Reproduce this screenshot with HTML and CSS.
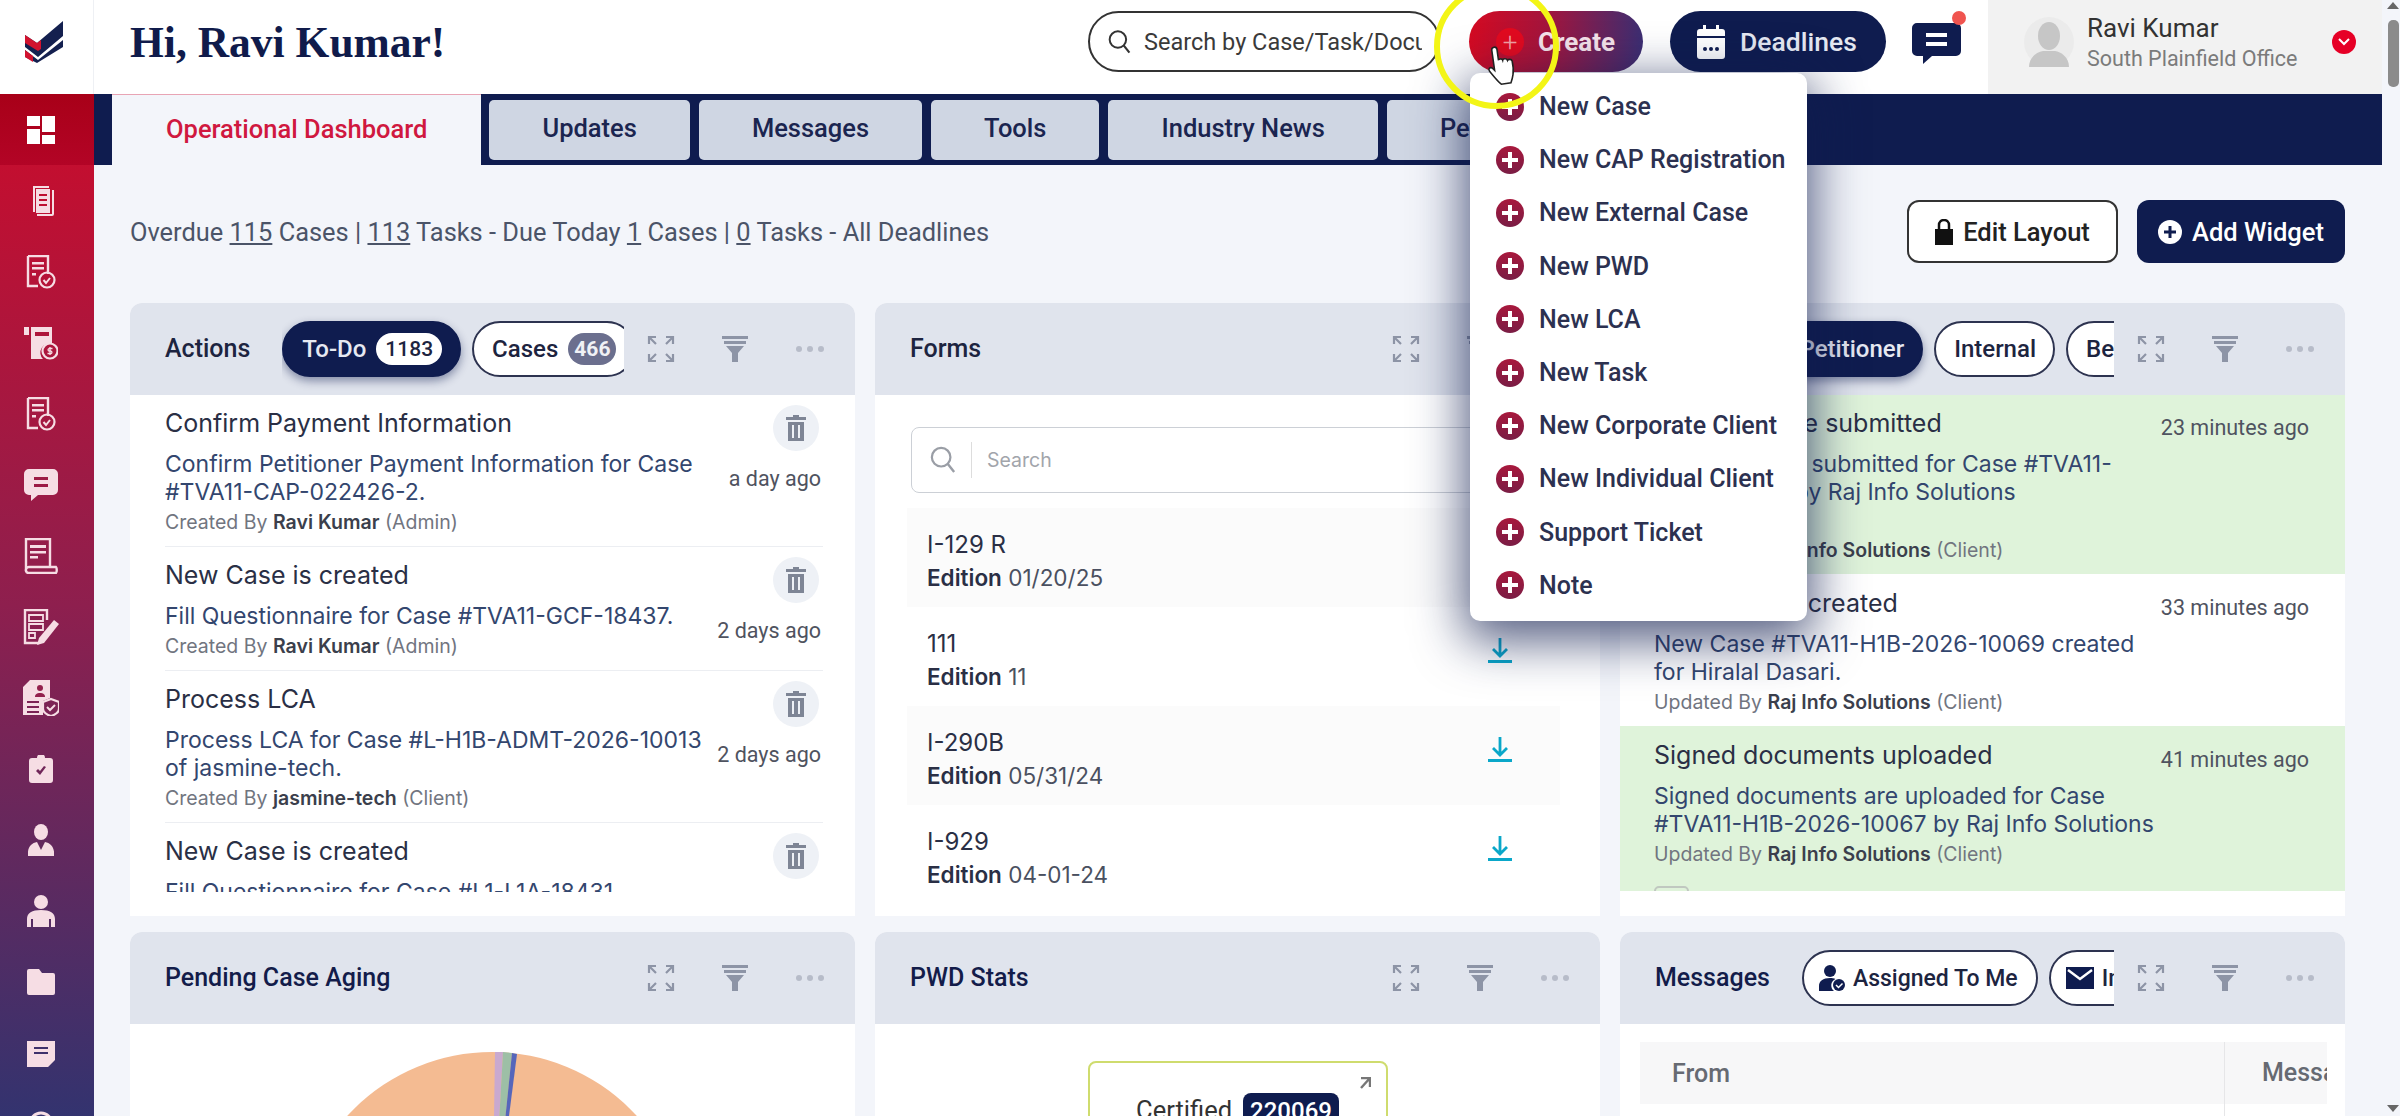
FILE: index.html
```html
<!DOCTYPE html>
<html lang="en">
<head>
  <meta charset="UTF-8">
  <title>Dashboard</title>
  <link rel="stylesheet" href="styles.css">
</head>
<body>

  <svg class="icon-defs" width="0" height="0">
    <defs>
      <symbol id="i-expand" viewBox="0 0 28 28">
        <path d="M2 9V2h7M2 2l7 7M19 2h7v7M26 2l-7 7M2 19v7h7M2 26l7-7M26 19v7h-7M26 26l-7-7" fill="none" stroke="currentColor" stroke-width="2.2"/>
      </symbol>
      <symbol id="i-filter" viewBox="0 0 26 26">
        <path d="M0 0h26v3H0zM2 5h22v3H2zM4 10h18l-6 7v9h-6v-9z" fill="currentColor"/>
      </symbol>
      <symbol id="i-dots" viewBox="0 0 30 6">
        <circle cx="4" cy="3" r="3" fill="currentColor"/><circle cx="15" cy="3" r="3" fill="currentColor"/><circle cx="26" cy="3" r="3" fill="currentColor"/>
      </symbol>
      <symbol id="i-trash" viewBox="0 0 20 26">
        <path d="M7 0h6v2h7v3H0V2h7zM2 7h16v19H2zM6 10v13h2V10zM12 10v13h2V10z" fill="currentColor" fill-rule="evenodd"/>
      </symbol>
      <symbol id="i-search" viewBox="0 0 28 30">
        <circle cx="12" cy="12" r="10" fill="none" stroke="currentColor" stroke-width="2.4"/>
        <path d="M19 19l7 9" stroke="currentColor" stroke-width="2.6" fill="none"/>
      </symbol>
      <symbol id="i-download" viewBox="0 0 24 26">
        <path d="M12 0v17M5 11l7 7 7-7" fill="none" stroke="currentColor" stroke-width="2.8"/>
        <path d="M0 22h24v3H0z" fill="currentColor"/>
      </symbol>
      <symbol id="i-plus" viewBox="0 0 28 28">
        <path d="M14 6v16M6 14h16" stroke="#fff" stroke-width="4"/>
      </symbol>
    </defs>
  </svg>

  <div class="page">
    <div class="app">
      <div class="brand">
        <svg width="38" height="42" viewBox="0 0 38 42">
          <path d="M0 14l12 8L38 0v15L13 36 0 26z" fill="#14204f"/>
          <path d="M0 14l12 8 4-3v9l-3 2L0 22z" fill="#d2122e"/>
          <path d="M0 29l13 10 25-20v7L12 42 0 36z" fill="#14204f"/>
          <path d="M0 29l8 6v6l-8-5z" fill="#d2122e"/>
        </svg>
      </div>

      <header class="topbar">
        <h1 class="greeting">Hi, Ravi Kumar!</h1>
        <div class="top-actions">
          <div class="global-search">
            <svg class="global-search-icon" width="28" height="30"><use href="#i-search"/></svg>
            <span class="global-search-text">Search by Case/Task/Document</span>
          </div>
          <div class="create-wrap">
            <button class="create-btn">
              <span class="create-plus">+</span>
              Create
            </button>
            <ul class="create-menu">
              <li><span class="plus-dot"><svg width="28" height="28"><use href="#i-plus"/></svg></span>New Case</li>
              <li><span class="plus-dot"><svg width="28" height="28"><use href="#i-plus"/></svg></span>New CAP Registration</li>
              <li><span class="plus-dot"><svg width="28" height="28"><use href="#i-plus"/></svg></span>New External Case</li>
              <li><span class="plus-dot"><svg width="28" height="28"><use href="#i-plus"/></svg></span>New PWD</li>
              <li><span class="plus-dot"><svg width="28" height="28"><use href="#i-plus"/></svg></span>New LCA</li>
              <li><span class="plus-dot"><svg width="28" height="28"><use href="#i-plus"/></svg></span>New Task</li>
              <li><span class="plus-dot"><svg width="28" height="28"><use href="#i-plus"/></svg></span>New Corporate Client</li>
              <li><span class="plus-dot"><svg width="28" height="28"><use href="#i-plus"/></svg></span>New Individual Client</li>
              <li><span class="plus-dot"><svg width="28" height="28"><use href="#i-plus"/></svg></span>Support Ticket</li>
              <li><span class="plus-dot"><svg width="28" height="28"><use href="#i-plus"/></svg></span>Note</li>
            </ul>
          </div>
          <button class="deadlines-btn">
            <svg width="28" height="34" viewBox="0 0 28 34">
              <path d="M6 0h3v4h10V0h3v4h3a3 3 0 0 1 3 3v4H0V7a3 3 0 0 1 3-3h3z" fill="#fff"/>
              <path d="M0 13h28v18a3 3 0 0 1-3 3H3a3 3 0 0 1-3-3z" fill="#fff"/>
              <circle cx="8" cy="24" r="2" fill="#0f1c4f"/><circle cx="14" cy="24" r="2" fill="#0f1c4f"/><circle cx="20" cy="24" r="2" fill="#0f1c4f"/>
            </svg>
            Deadlines
          </button>
          <div class="chat-btn">
            <svg width="49" height="42" viewBox="0 0 49 42">
              <path d="M5 1h39a5 5 0 0 1 5 5v23a5 5 0 0 1-5 5H20l-9 8v-8H5a5 5 0 0 1-5-5V6a5 5 0 0 1 5-5z" fill="#0f1c4f"/>
              <path d="M14 11h21v4H14zM14 20h21v4H14z" fill="#fff"/>
            </svg>
            <span class="chat-dot"></span>
          </div>
          <div class="user-box">
            <div class="avatar">
              <svg width="40" height="46" viewBox="0 0 40 46">
                <ellipse cx="20" cy="15" rx="11" ry="14" fill="#c6c6c6"/>
                <path d="M0 46c0-10 8-15 14-16h12c6 1 14 6 14 16z" fill="#c6c6c6"/>
              </svg>
            </div>
            <div class="user-text">
              <div class="user-name">Ravi Kumar</div>
              <div class="user-office">South Plainfield Office</div>
            </div>
            <span class="user-caret">
              <svg width="12" height="8" viewBox="0 0 12 8"><path d="M1 1l5 5 5-5" fill="none" stroke="#fff" stroke-width="2"/></svg>
            </span>
          </div>
        </div>
      </header>

      <nav class="sidebar">
        <a class="side-item active">
          <svg width="28" height="28" viewBox="0 0 28 28"><path d="M0 0h13v10H0zM0 13h13v15H0zM15 0h13v16H15zM15 19h13v9H15z" fill="currentColor"/></svg>
        </a>
        <a class="side-item">
          <svg width="26" height="30" viewBox="0 0 26 30"><path d="M5 0h16v2H7v24H5zM24 4h2v24a2 2 0 0 1-2 2H9v-2h15z" fill="currentColor"/><path fill-rule="evenodd" d="M8 3h14v24H8zM11 8v2h8V8zM11 13v2h8v-2zM11 18v2h8v-2z" fill="currentColor"/></svg>
        </a>
        <a class="side-item">
          <svg width="30" height="34" viewBox="0 0 30 34"><path d="M2 1h20v18M12 31H2V1" fill="none" stroke="currentColor" stroke-width="2.4"/><path d="M6 7h12v2.4H6zM6 12h12v2.4H6zM6 18h4v2.4H6z" fill="currentColor"/><circle cx="21" cy="25" r="7.5" fill="none" stroke="currentColor" stroke-width="2.2"/><path d="M17.5 25l2.5 3 4-5" fill="none" stroke="currentColor" stroke-width="2"/></svg>
        </a>
        <a class="side-item">
          <svg width="34" height="34" viewBox="0 0 34 34"><path d="M0 1h5v8H0z" fill="currentColor"/><path fill-rule="evenodd" d="M7 1h21v17a9 9 0 0 0-9 15H7zM11 6v4h14V6z" fill="currentColor"/><circle cx="26" cy="25" r="7.5" fill="none" stroke="currentColor" stroke-width="2.2"/><path d="M28.500 22.500h-3.500a1.300 1.300 0 0 0 0 2.500h2a1.300 1.300 0 0 1 0 2.500h-3.500M26 21v8" fill="none" stroke="currentColor" stroke-width="1.300"/></svg>
        </a>
        <a class="side-item">
          <svg width="30" height="34" viewBox="0 0 30 34"><path d="M2 1h20v18M12 31H2V1" fill="none" stroke="currentColor" stroke-width="2.4"/><path d="M6 7h12v2.4H6zM6 12h12v2.4H6zM6 18h4v2.4H6z" fill="currentColor"/><circle cx="21" cy="25" r="7.5" fill="none" stroke="currentColor" stroke-width="2.2"/><path d="M17.5 25l2.5 3 4-5" fill="none" stroke="currentColor" stroke-width="2"/></svg>
        </a>
        <a class="side-item">
          <svg width="34" height="32" viewBox="0 0 34 32"><path fill-rule="evenodd" d="M5 0h24a5 5 0 0 1 5 5v16a5 5 0 0 1-5 5H14l-7 6v-6H5a5 5 0 0 1-5-5V5a5 5 0 0 1 5-5zM10 8v3h14V8zM10 15v3h14v-3z" fill="currentColor"/></svg>
        </a>
        <a class="side-item">
          <svg width="34" height="36" viewBox="0 0 34 36"><path d="M2 33V1h24v27M2 33a3 3 0 0 1 3-4h27c1 1 1 5 0 6H5a3 3 0 0 1-3-2z" fill="none" stroke="currentColor" stroke-width="2.4"/><path d="M6 7h16v3H6zM6 13h16v2.400H6zM6 18h8v2.400H6z" fill="currentColor"/></svg>
        </a>
        <a class="side-item">
          <svg width="36" height="36" viewBox="0 0 36 36"><path d="M24 11V1H2v33h14" fill="none" stroke="currentColor" stroke-width="2.4"/><path d="M6 6h14v6H6zM6 15h14v6H6zM6 24h6v5H6z" fill="none" stroke="currentColor" stroke-width="1.800"/><path d="M31 11l5 4-15 19-7 2 2-7z" fill="currentColor"/></svg>
        </a>
        <a class="side-item">
          <svg width="36" height="36" viewBox="0 0 36 36"><path fill-rule="evenodd" d="M7 0h20v18l-7 3v14H0V7zM4 21v2h12v-2zM4 26v2h12v-2zM4 31v2h12v-2z" fill="currentColor"/><circle cx="17" cy="8" r="3" fill="#93204d"/><path d="M12 17c0-3 2-4 5-4s5 1 5 4z" fill="#93204d"/><path d="M28 19l8 3v7c0 3-4 6-8 7-4-1-8-4-8-7v-7z" fill="none" stroke="currentColor" stroke-width="2.200"/><path d="M24 27l3 3 5-5" fill="none" stroke="currentColor" stroke-width="2"/></svg>
        </a>
        <a class="side-item">
          <svg width="24" height="28" viewBox="0 0 24 28"><path fill-rule="evenodd" d="M8 3a4 4 0 0 1 8 0h5a3 3 0 0 1 3 3v19a3 3 0 0 1-3 3H3a3 3 0 0 1-3-3V6a3 3 0 0 1 3-3zM7 16l4 4 6-8-2-1-4 5-2-2z" fill="currentColor"/></svg>
        </a>
        <a class="side-item">
          <svg width="26" height="32" viewBox="0 0 26 32"><ellipse cx="13" cy="8" rx="7" ry="8" fill="currentColor"/><path d="M0 32c-1-8 3-13 9-14l4 8 4-8c6 1 10 6 9 14z" fill="currentColor"/></svg>
        </a>
        <a class="side-item">
          <svg width="28" height="32" viewBox="0 0 28 32"><circle cx="14" cy="7" r="7" fill="currentColor"/><path d="M0 32V24c0-6 5-9 14-9s14 3 14 9v8h-4v-8h-2v8H6v-8H4v8z" fill="currentColor"/></svg>
        </a>
        <a class="side-item">
          <svg width="28" height="26" viewBox="0 0 28 26"><path d="M2 0h10l3 4h11a2 2 0 0 1 2 2v18a2 2 0 0 1-2 2H2a2 2 0 0 1-2-2V2a2 2 0 0 1 2-2z" fill="currentColor"/></svg>
        </a>
        <a class="side-item">
          <svg width="28" height="28" viewBox="0 0 28 28"><path fill-rule="evenodd" d="M0 2h28v19l-7 7H0zM7 8v2h14V8zM7 13v2h14v-2z" fill="currentColor"/></svg>
        </a>
        <a class="side-item">
          <svg width="28" height="28" viewBox="0 0 28 28"><circle cx="14" cy="14" r="11" fill="none" stroke="currentColor" stroke-width="3"/></svg>
        </a>
      </nav>

      <main class="main">
        <div class="tabbar">
          <a class="tab active">Operational Dashboard</a>
          <a class="tab">Updates</a>
          <a class="tab">Messages</a>
          <a class="tab">Tools</a>
          <a class="tab">Industry News</a>
          <a class="tab">Petitions</a>
        </div>

        <section class="content">
          <div class="summary-row">
            <p class="summary">Overdue <u>115</u> Cases | <u>113</u> Tasks - Due Today <u>1</u> Cases | <u>0</u> Tasks - All Deadlines</p>
            <div class="summary-btns">
              <button class="btn-outline">
                <svg width="18" height="26" viewBox="0 0 18 26"><path d="M4 10V6a5 5 0 0 1 10 0v4" fill="none" stroke="#111" stroke-width="2.500"/><path d="M0 10h18v16H0z" fill="#111"/></svg>
                Edit Layout
              </button>
              <button class="btn-solid">
                <svg width="24" height="24" viewBox="0 0 24 24"><circle cx="12" cy="12" r="12" fill="#fff"/><path d="M12 6v12M6 12h12" stroke="#0f1c4f" stroke-width="3"/></svg>
                Add Widget
              </button>
            </div>
          </div>

          <div class="widgets">

            <article class="card">
              <div class="card-head">
                <h3 class="card-title">Actions</h3>
                <div class="pills">
                  <span class="pill on">To-Do <b class="count">1183</b></span>
                  <span class="pill">Cases <b class="count grey">466</b></span>
                </div>
                <div class="tools">
                  <svg class="tool" width="28" height="28"><use href="#i-expand"/></svg>
                  <svg class="tool" width="26" height="26"><use href="#i-filter"/></svg>
                  <svg class="tool faint" width="30" height="6"><use href="#i-dots"/></svg>
                </div>
              </div>
              <div class="card-body">
                <div class="feed">
                  <div class="feed-item">
                    <div class="feed-text">
                      <div class="feed-title">Confirm Payment Information</div>
                      <div class="feed-desc">Confirm Petitioner Payment Information for Case #TVA11-CAP-022426-2.</div>
                      <div class="feed-meta">Created By <b>Ravi Kumar</b> (Admin)</div>
                    </div>
                    <div class="feed-side">
                      <span class="trash"><svg width="20" height="26"><use href="#i-trash"/></svg></span>
                      <span class="when">a day ago</span>
                    </div>
                  </div>
                  <div class="feed-item">
                    <div class="feed-text">
                      <div class="feed-title">New Case is created</div>
                      <div class="feed-desc">Fill Questionnaire for Case #TVA11-GCF-18437.</div>
                      <div class="feed-meta">Created By <b>Ravi Kumar</b> (Admin)</div>
                    </div>
                    <div class="feed-side">
                      <span class="trash"><svg width="20" height="26"><use href="#i-trash"/></svg></span>
                      <span class="when">2 days ago</span>
                    </div>
                  </div>
                  <div class="feed-item">
                    <div class="feed-text">
                      <div class="feed-title">Process LCA</div>
                      <div class="feed-desc">Process LCA for Case #L-H1B-ADMT-2026-10013<br>of jasmine-tech.</div>
                      <div class="feed-meta">Created By <b>jasmine-tech</b> (Client)</div>
                    </div>
                    <div class="feed-side">
                      <span class="trash"><svg width="20" height="26"><use href="#i-trash"/></svg></span>
                      <span class="when">2 days ago</span>
                    </div>
                  </div>
                  <div class="feed-item">
                    <div class="feed-text">
                      <div class="feed-title">New Case is created</div>
                      <div class="feed-desc">Fill Questionnaire for Case #L1-L1A-18431.</div>
                      <div class="feed-meta">Created By <b>Ravi Kumar</b> (Admin)</div>
                    </div>
                    <div class="feed-side">
                      <span class="trash"><svg width="20" height="26"><use href="#i-trash"/></svg></span>
                      <span class="when">2 days ago</span>
                    </div>
                  </div>
                </div>
              </div>
            </article>

            <article class="card">
              <div class="card-head">
                <h3 class="card-title">Forms</h3>
                <div class="pills"></div>
                <div class="tools">
                  <svg class="tool" width="28" height="28"><use href="#i-expand"/></svg>
                  <svg class="tool" width="26" height="26"><use href="#i-filter"/></svg>
                  <svg class="tool faint" width="30" height="6"><use href="#i-dots"/></svg>
                </div>
              </div>
              <div class="card-body forms-body">
                <div class="form-search">
                  <svg width="26" height="28"><use href="#i-search"/></svg>
                  <span class="form-search-text">Search</span>
                </div>
                <div class="form-row">
                  <div><div class="form-name">I-129 R</div><div class="form-ed"><b>Edition</b> 01/20/25</div></div>
                  <svg class="dl" width="24" height="26"><use href="#i-download"/></svg>
                </div>
                <div class="form-row">
                  <div><div class="form-name">111</div><div class="form-ed"><b>Edition</b> 11</div></div>
                  <svg class="dl" width="24" height="26"><use href="#i-download"/></svg>
                </div>
                <div class="form-row">
                  <div><div class="form-name">I-290B</div><div class="form-ed"><b>Edition</b> 05/31/24</div></div>
                  <svg class="dl" width="24" height="26"><use href="#i-download"/></svg>
                </div>
                <div class="form-row">
                  <div><div class="form-name">I-929</div><div class="form-ed"><b>Edition</b> 04-01-24</div></div>
                  <svg class="dl" width="24" height="26"><use href="#i-download"/></svg>
                </div>
              </div>
            </article>

            <article class="card">
              <div class="card-head">
                <h3 class="card-title">Updates</h3>
                <div class="pills">
                  <span class="pill on">Petitioner</span>
                  <span class="pill">Internal</span>
                  <span class="pill">Beneficiary</span>
                </div>
                <div class="tools">
                  <svg class="tool" width="28" height="28"><use href="#i-expand"/></svg>
                  <svg class="tool" width="26" height="26"><use href="#i-filter"/></svg>
                  <svg class="tool faint" width="30" height="6"><use href="#i-dots"/></svg>
                </div>
              </div>
              <div class="card-body">
                <div class="updates">
                  <div class="update green">
                    <div class="feed-text">
                      <div class="feed-title">Questionnaire submitted</div>
                      <div class="feed-desc">Questionnaire submitted for Case #TVA11-<br>2026-10069 by Raj Info Solutions<br>&nbsp;</div>
                      <div class="feed-meta">Updated By <b>Raj Info Solutions</b> (Client)</div>
                    </div>
                    <span class="when">23 minutes ago</span>
                  </div>
                  <div class="update">
                    <div class="feed-text">
                      <div class="feed-title">New Case is created</div>
                      <div class="feed-desc">New Case #TVA11-H1B-2026-10069 created<br>for Hiralal Dasari.</div>
                      <div class="feed-meta">Updated By <b>Raj Info Solutions</b> (Client)</div>
                    </div>
                    <span class="when">33 minutes ago</span>
                  </div>
                  <div class="update green">
                    <div class="feed-text">
                      <div class="feed-title">Signed documents uploaded</div>
                      <div class="feed-desc">Signed documents are uploaded for Case<br>#TVA11-H1B-2026-10067 by Raj Info Solutions</div>
                      <div class="feed-meta">Updated By <b>Raj Info Solutions</b> (Client)</div>
                      <div class="update-box"></div>
                    </div>
                    <span class="when">41 minutes ago</span>
                  </div>
                </div>
              </div>
            </article>

            <article class="card">
              <div class="card-head">
                <h3 class="card-title strong">Pending Case Aging</h3>
                <div class="pills"></div>
                <div class="tools">
                  <svg class="tool" width="28" height="28"><use href="#i-expand"/></svg>
                  <svg class="tool" width="26" height="26"><use href="#i-filter"/></svg>
                  <svg class="tool faint" width="30" height="6"><use href="#i-dots"/></svg>
                </div>
              </div>
              <div class="card-body">
                <svg class="pie" width="725" height="92" viewBox="0 0 725 92">
                  <circle cx="362" cy="224" r="196" fill="#f4bb92"/>
                  <path d="M362 224L365 28L373 28z" fill="#c9a9cf"/>
                  <path d="M362 224L373 28L382 29z" fill="#9dbfa6"/>
                  <path d="M362 224L382 29L387 30z" fill="#5566bb"/>
                </svg>
              </div>
            </article>

            <article class="card">
              <div class="card-head">
                <h3 class="card-title strong">PWD Stats</h3>
                <div class="pills"></div>
                <div class="tools">
                  <svg class="tool" width="28" height="28"><use href="#i-expand"/></svg>
                  <svg class="tool" width="26" height="26"><use href="#i-filter"/></svg>
                  <svg class="tool faint" width="30" height="6"><use href="#i-dots"/></svg>
                </div>
              </div>
              <div class="card-body">
                <div class="stat-box">
                  <svg class="stat-arrow" width="12" height="12" viewBox="0 0 12 12"><path d="M2 1h9v9M11 1L2 11" fill="none" stroke="#777" stroke-width="2.400"/></svg>
                  <span class="stat-label">Certified</span>
                  <span class="stat-num">220069</span>
                </div>
              </div>
            </article>

            <article class="card">
              <div class="card-head">
                <h3 class="card-title strong">Messages</h3>
                <div class="pills">
                  <span class="pill with-icon">
                    <svg width="26" height="26" viewBox="0 0 26 26"><circle cx="11" cy="6" r="6" fill="#0f1c4f"/><path d="M0 26v-5c0-5 4-8 11-8 2 0 4 .3 5.500 1a7 7 0 0 0-1.500 12z" fill="#0f1c4f"/><circle cx="20" cy="20" r="6" fill="#0f1c4f"/><path d="M17 20l2.500 2.500 4-4" fill="none" stroke="#fff" stroke-width="1.500"/></svg>
                    Assigned To Me
                  </span>
                  <span class="pill with-icon">
                    <svg width="28" height="22" viewBox="0 0 28 22"><path d="M0 0h28v22H0z" fill="#0f1c4f"/><path d="M2 3l12 9 12-9" fill="none" stroke="#fff" stroke-width="2.400"/></svg>
                    Inbox
                  </span>
                </div>
                <div class="tools">
                  <svg class="tool" width="28" height="28"><use href="#i-expand"/></svg>
                  <svg class="tool" width="26" height="26"><use href="#i-filter"/></svg>
                  <svg class="tool faint" width="30" height="6"><use href="#i-dots"/></svg>
                </div>
              </div>
              <div class="card-body">
                <div class="msg-table">
                  <div class="msg-head">
                    <span class="msg-from">From</span>
                    <span class="msg-text">Message</span>
                  </div>
                  <div class="msg-line"></div>
                </div>
              </div>
            </article>

          </div>
        </section>
      </main>
    </div>

    <div class="scrollbar">
      <span class="scroll-up"></span>
      <span class="scroll-thumb"></span>
      <span class="scroll-down"></span>
    </div>

    <!-- recording overlay: click highlight and pointer -->
    <div class="click-ring"></div>
    <svg class="hand" width="32" height="44" viewBox="0 0 30 42">
      <path d="M9 2c1.500 0 2.500 1 2.500 2.500V15c0-1 3.500-2 4 .5.500-1.500 4-1.500 4.500.8.800-1.200 4-1 4.300 1.200.3 4 .2 9-1 13-1 3.500-2 5.500-3 7.500H11C8 35 4 28 1.500 24c-1-2 1-4 3-2.500l2 2.500V4.500C6.500 3 7.500 2 9 2z" fill="#fff" stroke="#222" stroke-width="1.500"/>
    </svg>
  </div>

</body>
</html>
```

FILE: styles.css
```css
* {
  box-sizing: border-box;
}

html, body {
  margin: 0;
  height: 1116px;
  overflow: hidden;
}

body {
  font-family: Roboto, sans-serif;
  background: #f3f5fa;
  color: #2a2f45;
}

.icon-defs {
  position: absolute;
}

.page {
  position: relative;
  display: flex;
  height: 1116px;
  overflow: hidden;
}

.app {
  display: grid;
  grid-template-columns: 94px 2288px;
  grid-template-rows: 94px 1022px;
  width: 2382px;
}

/* top row */
.brand {
  display: flex;
  align-items: center;
  justify-content: center;
  padding: 0 6px 10px 0;
  background: #fff;
  border-right: 1px solid #eef0f4;
}

.topbar {
  position: relative;
  z-index: 5;
  display: flex;
  align-items: center;
  justify-content: space-between;
  background: #fff;
  padding-left: 36px;
}

.greeting {
  margin: 0 0 11px;
  font-family: "Liberation Serif", serif;
  font-size: 43.500px;
  font-weight: 700;
  color: #101b4b;
}

.top-actions {
  display: flex;
  align-items: flex-start;
  height: 94px;
  padding-top: 11px;
}

.global-search {
  display: flex;
  align-items: center;
  gap: 13px;
  width: 352px;
  height: 61px;
  padding: 0 16px 0 18px;
  border: 2px solid #333;
  border-radius: 31px;
  color: #333;
}

.global-search-text {
  overflow: hidden;
  white-space: nowrap;
  font-size: 23.500px;
  color: #3a3a3a;
}

.create-wrap {
  position: relative;
  margin-left: 29px;
}

.create-btn {
  display: flex;
  align-items: center;
  gap: 14px;
  width: 174px;
  height: 61px;
  padding: 0 0 0 27px;
  border: none;
  border-radius: 31px;
  background: linear-gradient(90deg, #d40a22 0%, #a3153d 45%, #3c2e72 100%);
  color: #f6e4ea;
  font-family: Roboto, sans-serif;
  font-size: 26px;
  font-weight: 700;
}

.create-plus {
  display: flex;
  align-items: center;
  justify-content: center;
  width: 28px;
  height: 28px;
  border-radius: 50%;
  background: #e20a1f;
  color: #f4a0a4;
  font-size: 26px;
  font-weight: 300;
}

.create-menu {
  position: absolute;
  top: 62px;
  left: 1px;
  z-index: 6;
  width: 337px;
  height: 548px;
  margin: 0;
  padding: 7px 0 0 26px;
  list-style: none;
  background: #fff;
  border-radius: 10px;
  box-shadow: 0 14px 50px 6px rgba(15, 28, 79, 0.7);
}

.create-menu li {
  display: flex;
  align-items: center;
  gap: 15px;
  height: 53.2px;
  font-size: 25px;
  font-weight: 500;
  white-space: nowrap;
  color: #2c3150;
}

.plus-dot {
  display: flex;
  width: 28px;
  height: 28px;
  border-radius: 50%;
  background: linear-gradient(180deg, #a8183c, #7a1d45);
}

.deadlines-btn {
  display: flex;
  align-items: center;
  gap: 15px;
  width: 216px;
  height: 61px;
  margin-left: 27px;
  padding: 0 0 0 27px;
  border: none;
  border-radius: 31px;
  background: #0f1c4f;
  color: #e6e9f2;
  font-family: Roboto, sans-serif;
  font-size: 26.500px;
  font-weight: 500;
}

.chat-btn {
  position: relative;
  display: flex;
  margin: 11px 0 0 26px;
}

.chat-dot {
  position: absolute;
  top: -11px;
  right: -5px;
  width: 14px;
  height: 14px;
  border-radius: 50%;
  background: #f0544f;
}

.user-box {
  display: flex;
  align-items: center;
  width: 394px;
  height: 94px;
  margin: -11px 0 0 27px;
  padding: 0 0 11px 36px;
  background: #f2f2f2;
}

.avatar {
  display: flex;
  align-items: flex-end;
  justify-content: center;
  width: 50px;
  height: 50px;
  border-radius: 50%;
  background: #ebebeb;
}

.user-text {
  flex: 1;
  margin-left: 13px;
}

.user-name {
  font-size: 26px;
  line-height: 34px;
  color: #333;
}

.user-office {
  font-size: 21.500px;
  line-height: 28px;
  color: #7b7b7b;
}

.user-caret {
  display: flex;
  align-items: center;
  justify-content: center;
  width: 24px;
  height: 24px;
  margin-right: 26px;
  border-radius: 50%;
  background: #e60026;
}

/* left rail */
.sidebar {
  overflow: hidden;
  background: linear-gradient(180deg, #cb0c2b 0%, #8e1f4e 50%, #33336f 100%);
  color: #f6dde4;
}

.side-item {
  display: flex;
  align-items: center;
  justify-content: center;
  height: 71px;
  padding-right: 12px;
}

.side-item.active {
  background: linear-gradient(180deg, #a80018, #b30426);
  color: #fff;
}

/* tabs */
.main {
  overflow: hidden;
}

.tabbar {
  display: flex;
  align-items: center;
  gap: 9px;
  height: 71px;
  padding-left: 18px;
  background: #0f1c4f;
}

.tab {
  display: flex;
  align-items: center;
  height: 60px;
  padding: 0 53px 4px;
  border-radius: 5px;
  background: #cfd6e3;
  color: #1b2550;
  font-size: 25.500px;
  font-weight: 500;
}

.tab.active {
  height: 71px;
  margin-right: -1px;
  padding: 0 54px 2px;
  border-radius: 0;
  background: #f3f5fa;
  color: #d0183f;
  border-top: 1px solid #e8a4b4;
}

/* content */
.content {
  padding: 35px 37px 0 36px;
}

.summary-row {
  display: flex;
  align-items: center;
  justify-content: space-between;
  height: 63px;
}

.summary {
  margin: 0;
  font-size: 25.400px;
  color: #4b5468;
}

.summary-btns {
  display: flex;
  gap: 19px;
}

.btn-outline,
.btn-solid {
  display: flex;
  align-items: center;
  justify-content: center;
  gap: 10px;
  height: 63px;
  border-radius: 12px;
  font-family: Roboto, sans-serif;
  font-size: 25.500px;
  font-weight: 500;
}

.btn-outline {
  width: 211px;
  border: 2px solid #333;
  background: #fff;
  color: #222;
}

.btn-solid {
  width: 208px;
  border: none;
  background: #0f1c4f;
  color: #fff;
}

.widgets {
  display: grid;
  grid-template-columns: repeat(3, 725px);
  grid-template-rows: 613px 300px;
  gap: 16px 20px;
  margin-top: 40px;
}

.card {
  border-radius: 12px 12px 0 0;
  background: #fff;
  overflow: hidden;
}

.card-head {
  display: flex;
  align-items: center;
  height: 92px;
  padding-left: 35px;
  background: #e0e4ed;
}

.card-title {
  margin: 0 32px 2px 0;
  font-size: 25px;
  font-weight: 500;
  white-space: nowrap;
  color: #1d2440;
}

.card-title.strong {
  color: #131c4a;
}

.pills {
  flex: 1;
  display: flex;
  align-items: center;
  gap: 11px;
  min-width: 0;
  overflow: hidden;
  height: 92px;
}

.pill {
  flex: none;
  display: flex;
  align-items: center;
  gap: 10px;
  height: 56px;
  padding: 0 17px 0 18px;
  border: 2px solid #2d3350;
  border-radius: 28px;
  background: #fff;
  color: #1d2440;
  font-size: 24px;
  font-weight: 500;
}

.pill.on {
  background: #0f1c4f;
  border-color: #0f1c4f;
  color: #e6e9f2;
  box-shadow: 0 4px 10px rgba(15, 28, 79, 0.45);
}

.pill.with-icon {
  gap: 8px;
  padding: 0 18px 0 15px;
  font-size: 23px;
}

.count {
  display: flex;
  align-items: center;
  height: 32px;
  padding: 0 9px;
  border-radius: 16px;
  background: #fff;
  color: #1d2440;
  font-size: 21px;
  font-weight: 500;
}

.count.grey {
  padding: 0 6px;
  background: #6b6f8e;
  color: #f0f1f5;
  font-weight: 700;
}

.tools {
  flex: none;
  display: flex;
  align-items: center;
  width: 231px;
  height: 92px;
  padding-left: 23px;
  gap: 47px;
  color: #8d94a6;
}

.tool.faint {
  color: #b7bcc9;
}

/* feed lists */
.feed {
  height: 497px;
  padding: 0 32px 0 35px;
  overflow: hidden;
}

.feed-item {
  display: flex;
  justify-content: space-between;
  padding: 13px 2px 10px 0;
  border-top: 1px solid #eceef2;
}

.feed-item:first-child {
  border-top: none;
}

.feed-title {
  font-family: Inter, sans-serif;
  font-size: 25px;
  line-height: 30px;
  color: #2a2f45;
}

.feed-desc {
  margin-top: 12px;
  font-family: Inter, sans-serif;
  font-size: 23px;
  line-height: 28px;
  color: #33466e;
}

.feed-meta {
  margin-top: 2px;
  font-family: Inter, sans-serif;
  font-size: 19.500px;
  line-height: 28px;
  color: #71757f;
}

.feed-meta b {
  font-weight: 600;
  color: #3b3f4c;
}

.feed-text {
  min-width: 0;
}

.feed-side {
  flex: none;
  display: flex;
  flex-direction: column;
  align-items: flex-end;
  width: 115px;
}

.trash {
  display: flex;
  align-items: center;
  justify-content: center;
  width: 46px;
  height: 46px;
  margin: -3px 2px 0 0;
  border-radius: 50%;
  background: #eef1f6;
  color: #7e8595;
}

.when {
  flex: none;
  margin-top: 14px;
  font-size: 21.500px;
  line-height: 28px;
  white-space: nowrap;
  color: #4f5360;
}

.updates {
  height: 496px;
  overflow: hidden;
}

.update {
  display: flex;
  justify-content: space-between;
  padding: 14px 36px 10px 34px;
}

.update:first-child {
  padding-top: 13px;
}

.update.green {
  background: #dff3da;
}

.update .when {
  margin-top: 6px;
}

.update-box {
  width: 35px;
  height: 30px;
  margin-top: 18px;
  border: 2px solid #c0c8c0;
  border-radius: 5px;
}

/* forms */
.forms-body {
  padding: 32px 40px 0 32px;
}

.form-search {
  display: flex;
  align-items: center;
  height: 66px;
  margin: 0 -5px 15px 4px;
  padding-left: 18px;
  border: 1px solid #ccd0d6;
  border-radius: 8px;
  color: #9a9ea6;
}

.form-search-text {
  margin-left: 15px;
  padding-left: 15px;
  border-left: 1px solid #ddd;
  font-family: Inter, sans-serif;
  font-size: 19.500px;
  line-height: 36px;
  color: #a2a5ab;
}

.form-row {
  display: flex;
  align-items: center;
  justify-content: space-between;
  height: 99px;
  padding: 6px 48px 0 20px;
}

.form-row:nth-child(even) {
  background: #fbfbfb;
}

.form-name {
  font-family: Inter, sans-serif;
  font-size: 24px;
  line-height: 30px;
  color: #2a2f45;
}

.form-ed {
  margin-top: 5px;
  font-family: Inter, sans-serif;
  font-size: 22.500px;
  line-height: 26px;
  color: #4a5060;
}

.form-ed b {
  font-weight: 600;
  color: #2a2f45;
}

.dl {
  margin-bottom: 18px;
  color: #0aa7c9;
}

/* second row bodies */
.pie {
  display: block;
}

.stat-box {
  position: relative;
  width: 300px;
  height: 120px;
  margin: 37px auto 0;
  padding-top: 30px;
  border: 2px solid #cfdc6e;
  border-radius: 8px;
  display: flex;
  justify-content: center;
  align-items: flex-start;
  gap: 11px;
  font-size: 25.500px;
}

.stat-arrow {
  position: absolute;
  top: 14px;
  right: 15px;
}

.stat-label {
  line-height: 34px;
  color: #333;
}

.stat-num {
  padding: 0 7px;
  border-radius: 8px;
  background: #0f1c4f;
  color: #fff;
  font-size: 24px;
  font-weight: 500;
  line-height: 36px;
}

.msg-table {
  margin: 18px 18px 0 20px;
  overflow: hidden;
}

.msg-head {
  display: flex;
  height: 62px;
  align-items: center;
  background: #f7f7f8;
  font-size: 25px;
  font-weight: 500;
  color: #666a72;
}

.msg-from {
  width: 584px;
  padding-left: 32px;
}

.msg-text {
  flex: 1;
  padding-left: 37px;
  height: 62px;
  line-height: 62px;
  border-left: 1px solid #e6e6e8;
  white-space: nowrap;
  overflow: hidden;
}

.msg-line {
  height: 14px;
  margin-left: 584px;
  border-left: 1px solid #e6e6e8;
}

/* window scrollbar */
.scrollbar {
  display: flex;
  flex-direction: column;
  align-items: center;
  width: 18px;
  height: 1116px;
  padding: 2px 0 4px 4px;
  background: #f3f5fa;
}

.scroll-up,
.scroll-down {
  width: 0;
  height: 0;
  border-left: 6px solid transparent;
  border-right: 6px solid transparent;
}

.scroll-up {
  border-bottom: 7px solid #666;
}

.scroll-down {
  margin-top: auto;
  border-top: 7px solid #666;
}

.scroll-thumb {
  width: 11px;
  height: 67px;
  margin-top: 11px;
  border-radius: 5px;
  background: #8b8b8b;
}

/* recording overlay */
.click-ring {
  position: absolute;
  left: 1434px;
  top: -16px;
  z-index: 10;
  width: 125px;
  height: 125px;
  border: 6px solid #f3f516;
  border-radius: 50%;
}

.hand {
  position: absolute;
  left: 1487px;
  top: 44px;
  z-index: 11;
  transform: rotate(-8deg);
}
```
